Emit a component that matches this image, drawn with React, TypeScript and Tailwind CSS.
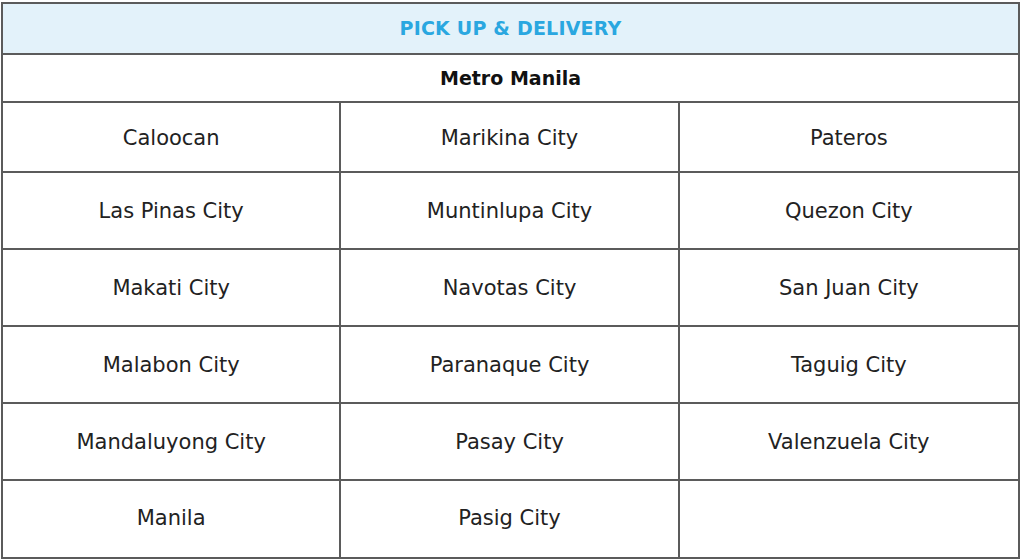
import React from 'react'

const cities = [
  'Caloocan', 'Marikina City', 'Pateros',
  'Las Pinas City', 'Muntinlupa City', 'Quezon City',
  'Makati City', 'Navotas City', 'San Juan City',
  'Malabon City', 'Paranaque City', 'Taguig City',
  'Mandaluyong City', 'Pasay City', 'Valenzuela City',
  'Manila', 'Pasig City', '',
]

export default function App() {
  return (
    <div className="w-[1024px] h-[560px] bg-white pl-px pt-[2px]" style={{ fontFamily: '"DejaVu Sans", sans-serif' }}>
      <div className="w-[1019px] border-2 border-[#5b5b5b]">
        <div className="h-[51px] flex items-center justify-center bg-[#e3f2fa] border-b-2 border-[#5b5b5b] text-[#2aa7e0] font-bold text-[19px] tracking-[0.2px]">
          PICK UP &amp; DELIVERY
        </div>
        <div className="h-[48px] flex items-center justify-center border-b-2 border-[#5b5b5b] text-[#111] font-bold text-[19px]">
          Metro Manila
        </div>
        <div className="grid grid-cols-3">
          {cities.map((c, i) => (
            <div
              key={i}
              className={`flex items-center justify-center text-[21px] text-[#222] ${i < 3 ? 'h-[70px] pt-[4px]' : i < 15 ? 'h-[77px] pt-[3px]' : 'h-[76px]'} ${i % 3 !== 2 ? 'border-r-2' : ''} ${i < 15 ? 'border-b-2' : ''} border-[#5b5b5b]`}
            >
              {c}
            </div>
          ))}
        </div>
      </div>
    </div>
  )
}
